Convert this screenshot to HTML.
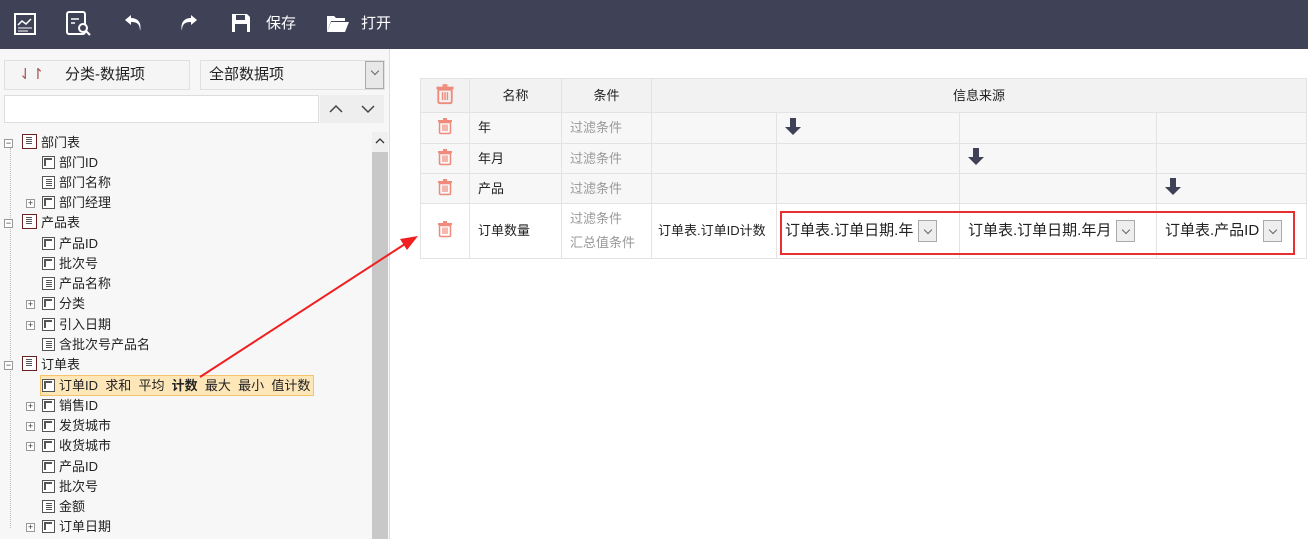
<!DOCTYPE html>
<html><head><meta charset="utf-8"><style>
*{box-sizing:border-box;margin:0;padding:0}
body{width:1308px;height:539px;overflow:hidden;font-family:"Liberation Sans","Noto Sans CJK SC",sans-serif;font-size:13px;color:#222;background:#fff;position:relative}
.tb{position:absolute;left:0;top:0;width:1308px;height:49px;background:#3f4257;color:#fff}
.tb .t{position:absolute;top:12px;font-size:15px}
.left{position:absolute;left:0;top:49px;width:390px;height:490px;background:#f7f7f7;border-right:1px solid #ddd}
.abs{position:absolute}
.tree div.r{position:absolute;height:20px;line-height:20px;font-size:13px;white-space:nowrap}
.ic{display:inline-block;width:13px;height:13px;border:1.5px solid #555;vertical-align:-2px;margin-right:4px;position:relative;background:#fff}
.ic:after{content:"";position:absolute;left:1px;top:1px;width:2px;height:8px;background:#555;box-shadow:2px -0px 0 -0px transparent}
.ic:before{content:"";position:absolute;left:1px;top:1px;width:8px;height:2px;background:#555}
.ic.f:after{left:3px;top:2px;width:6px;height:1px;box-shadow:0 2px #555,0 4px #555,0 6px #555;background:#555}
.ic.f:before{display:none}
.tbl{position:absolute;left:420px;top:78px;border-collapse:collapse;table-layout:fixed;width:886px}
.tbl td{border:1px solid #e3e3e3;background:#f7f7f7;font-size:13px;padding:0 8px;line-height:16px;overflow:hidden;white-space:nowrap}
.gray{color:#999}
.pm{position:absolute;width:9px;height:9px;border:1px solid #999;background:#fff;font-size:9px;line-height:7px;text-align:center;color:#333}
.sel{border:1px solid #aaa;background:#eee;width:19px;height:22px;display:inline-block;vertical-align:middle;position:relative}
.sel:after{content:"";position:absolute;left:6px;top:6px;width:5px;height:5px;border-right:1px solid #666;border-bottom:1px solid #666;transform:rotate(45deg)}
</style></head><body>
<svg width="0" height="0" style="position:absolute"><defs>
<g id="tr"><rect x="1" y="3" width="14" height="2" fill="#f08a7a"/><rect x="6" y="1" width="4" height="2" fill="#f08a7a"/><path d="M2.5 5.5 H13.5 V15 Q13.5 16.5 12 16.5 H4 Q2.5 16.5 2.5 15 Z" fill="none" stroke="#f08a7a" stroke-width="1.5"/><line x1="6" y1="7.5" x2="6" y2="14" stroke="#f08a7a" stroke-width="1.2"/><line x1="8" y1="7.5" x2="8" y2="14" stroke="#f08a7a" stroke-width="1.2"/><line x1="10" y1="7.5" x2="10" y2="14" stroke="#f08a7a" stroke-width="1.2"/></g>
<g id="ar"><rect x="5" y="0" width="6" height="9" fill="#3f4257"/><polygon points="0,9 16,9 8,17" fill="#3f4257"/></g>
</defs></svg>
<div class="tb">
<svg class="abs" style="left:14px;top:13px" width="22" height="22"><rect x="1" y="1" width="20" height="20" fill="none" stroke="#fff" stroke-width="2"/><polyline points="4,12 8,8 12,11 17,6" fill="none" stroke="#fff" stroke-width="1.5"/><line x1="4" y1="15" x2="18" y2="15" stroke="#fff"/><line x1="4" y1="18" x2="14" y2="18" stroke="#fff"/></svg>
<svg class="abs" style="left:66px;top:11px" width="26" height="26"><rect x="1" y="1" width="18" height="22" rx="2" fill="none" stroke="#fff" stroke-width="2"/><line x1="5" y1="8" x2="13" y2="8" stroke="#fff" stroke-width="1.5"/><line x1="5" y1="12" x2="9" y2="12" stroke="#fff" stroke-width="1.5"/><circle cx="17" cy="17" r="4" fill="#3f4257" stroke="#fff" stroke-width="2"/><line x1="20" y1="20" x2="24" y2="24" stroke="#fff" stroke-width="2"/></svg>
<svg class="abs" style="left:123px;top:12px" width="22" height="22"><path d="M8 3 L2 8 L8 13 V10 C14 10 17 12 17 19 C19 11 15 6 8 6 Z" fill="#fff"/></svg>
<svg class="abs" style="left:177px;top:12px" width="22" height="22"><path d="M14 3 L20 8 L14 13 V10 C8 10 5 12 5 19 C3 11 7 6 14 6 Z" fill="#fff"/></svg>
<svg class="abs" style="left:231px;top:13px" width="20" height="20"><path d="M1 1 H16 L19 4 V19 H1 Z" fill="#fff"/><rect x="5" y="2" width="9" height="5" fill="#3f4257"/><rect x="4" y="11" width="12" height="8" fill="#3f4257"/></svg>
<div class="t" style="left:266px">保存</div>
<svg class="abs" style="left:326px;top:14px" width="24" height="20"><path d="M1 2 H8 L10 4 H19 V7 H5 L1 18 Z" fill="#fff"/><path d="M5 8 H23 L19 18 H1 Z" fill="#fff"/></svg>
<div class="t" style="left:361px">打开</div>
</div>
<div class="left">
<div class="abs" style="left:4px;top:11px;width:186px;height:30px;border:1px solid #e0e0e0;background:#f5f5f5;font-size:15px;line-height:28px"><span style="position:absolute;left:14px;color:#a55">⇃↾</span><span style="position:absolute;left:60px">分类-数据项</span></div>
<div class="abs" style="left:200px;top:11px;width:185px;height:30px;border:1px solid #e0e0e0;background:#f5f5f5;font-size:15px;line-height:28px;padding-left:8px">全部数据项<span class="sel" style="position:absolute;right:0;top:0;width:19px;height:28px;background:#e8e8e8"></span></div>
<div class="abs" style="left:4px;top:46px;width:315px;height:28px;border:1px solid #ddd;background:#fff"></div>
<div class="abs" style="left:320px;top:46px;width:64px;height:28px;background:#eee"></div>
<svg class="abs" style="left:320px;top:46px" width="64" height="28"><polyline points="10,17 16,11 22,17" fill="none" stroke="#444" stroke-width="1.5"/><polyline points="42,11 48,17 54,11" fill="none" stroke="#444" stroke-width="1.5"/></svg>
<div class="abs" style="left:372px;top:83px;width:16px;height:407px;background:#f0f0f0"></div>
<div class="abs" style="left:372px;top:103px;width:16px;height:387px;background:#c8c8c8"></div>
<svg class="abs" style="left:372px;top:86px" width="16" height="12"><polyline points="4,8 8,4 12,8" fill="none" stroke="#333" stroke-width="1.3"/></svg>
</div>
<div class="tree">
<div class="abs" style="left:10px;top:148px;height:380px;border-left:1px dotted #bbb"></div>
<div class="pm" style="left:4px;top:139px">−</div><div class="pm" style="left:4px;top:219px">−</div><div class="pm" style="left:4px;top:361px">−</div>
<div class="pm" style="left:26px;top:199px">+</div><div class="pm" style="left:26px;top:300px">+</div><div class="pm" style="left:26px;top:321px">+</div><div class="pm" style="left:26px;top:402px">+</div><div class="pm" style="left:26px;top:422px">+</div><div class="pm" style="left:26px;top:442px">+</div><div class="pm" style="left:26px;top:523px">+</div>
<div class="r" style="left:22px;top:133px"><span class="ic f" style="border-color:#6a2020;width:15px;height:15px"></span>部门表</div>
<div class="r" style="left:42px;top:153px"><span class="ic"></span>部门ID</div>
<div class="r" style="left:42px;top:173px"><span class="ic f"></span>部门名称</div>
<div class="r" style="left:42px;top:193px"><span class="ic"></span>部门经理</div>
<div class="r" style="left:22px;top:213px"><span class="ic f" style="border-color:#6a2020;width:15px;height:15px"></span>产品表</div>
<div class="r" style="left:42px;top:234px"><span class="ic"></span>产品ID</div>
<div class="r" style="left:42px;top:254px"><span class="ic"></span>批次号</div>
<div class="r" style="left:42px;top:274px"><span class="ic f"></span>产品名称</div>
<div class="r" style="left:42px;top:294px"><span class="ic"></span>分类</div>
<div class="r" style="left:42px;top:315px"><span class="ic"></span>引入日期</div>
<div class="r" style="left:42px;top:335px"><span class="ic f"></span>含批次号产品名</div>
<div class="r" style="left:22px;top:355px"><span class="ic f" style="border-color:#6a2020;width:15px;height:15px"></span>订单表</div>
<div class="r" style="left:40px;top:375px;background:#fde6b8;border:1px solid #f5c46a;padding:0 3px 0 1px;height:21px"><span class="ic"></span>订单ID&nbsp; 求和&nbsp; 平均&nbsp; <b>计数</b>&nbsp; 最大&nbsp; 最小&nbsp; 值计数</div>
<div class="r" style="left:42px;top:396px"><span class="ic"></span>销售ID</div>
<div class="r" style="left:42px;top:416px"><span class="ic"></span>发货城市</div>
<div class="r" style="left:42px;top:436px"><span class="ic"></span>收货城市</div>
<div class="r" style="left:42px;top:457px"><span class="ic"></span>产品ID</div>
<div class="r" style="left:42px;top:477px"><span class="ic"></span>批次号</div>
<div class="r" style="left:42px;top:497px"><span class="ic f"></span>金额</div>
<div class="r" style="left:42px;top:517px"><span class="ic"></span>订单日期</div>
</div>
<table class="tbl">
<colgroup><col style="width:49px"><col style="width:92px"><col style="width:90px"><col style="width:125px"><col style="width:183px"><col style="width:197px"><col style="width:150px"></colgroup>
<tr style="height:34px"><td style="text-align:center;background:#f2f2f2"><svg width="20" height="22" viewBox="0 0 16 18"><use href="#tr"/></svg></td><td style="text-align:center;background:#f2f2f2">名称</td><td style="text-align:center;background:#f2f2f2">条件</td><td colspan="4" style="text-align:center;background:#f2f2f2">信息来源</td></tr>
<tr style="height:31px"><td style="text-align:center"><svg width="16" height="18"><use href="#tr"/></svg></td><td>年</td><td class="gray">过滤条件</td><td></td><td><svg width="16" height="17"><use href="#ar"/></svg></td><td></td><td></td></tr>
<tr style="height:30px"><td style="text-align:center"><svg width="16" height="18"><use href="#tr"/></svg></td><td>年月</td><td class="gray">过滤条件</td><td></td><td></td><td><svg width="16" height="17"><use href="#ar"/></svg></td><td></td></tr>
<tr style="height:30px"><td style="text-align:center"><svg width="16" height="18"><use href="#tr"/></svg></td><td>产品</td><td class="gray">过滤条件</td><td></td><td></td><td></td><td><svg width="16" height="17"><use href="#ar"/></svg></td></tr>
<tr style="height:55px"><td style="text-align:center;background:#fff"><svg width="16" height="18"><use href="#tr"/></svg></td><td style="background:#fff">订单数量</td><td class="gray" style="background:#fff;line-height:24px">过滤条件<br>汇总值条件</td><td style="background:#fff;padding:0 6px">订单表.订单ID计数</td><td style="background:#fff;font-size:15px">订单表.订单日期.年 <span class="sel"></span></td><td style="background:#fff;font-size:15px">订单表.订单日期.年月 <span class="sel"></span></td><td style="background:#fff;font-size:15px">订单表.产品ID <span class="sel"></span></td></tr>
</table>
<div class="abs" style="left:780px;top:211px;width:515px;height:44px;border:2px solid #e83030"></div>
<svg class="abs" style="left:0;top:0" width="1308" height="539"><line x1="200" y1="377" x2="405" y2="244" stroke="#f02020" stroke-width="2"/><polygon points="418,236 400,239 407,250" fill="#f02020"/></svg>
</body></html>
